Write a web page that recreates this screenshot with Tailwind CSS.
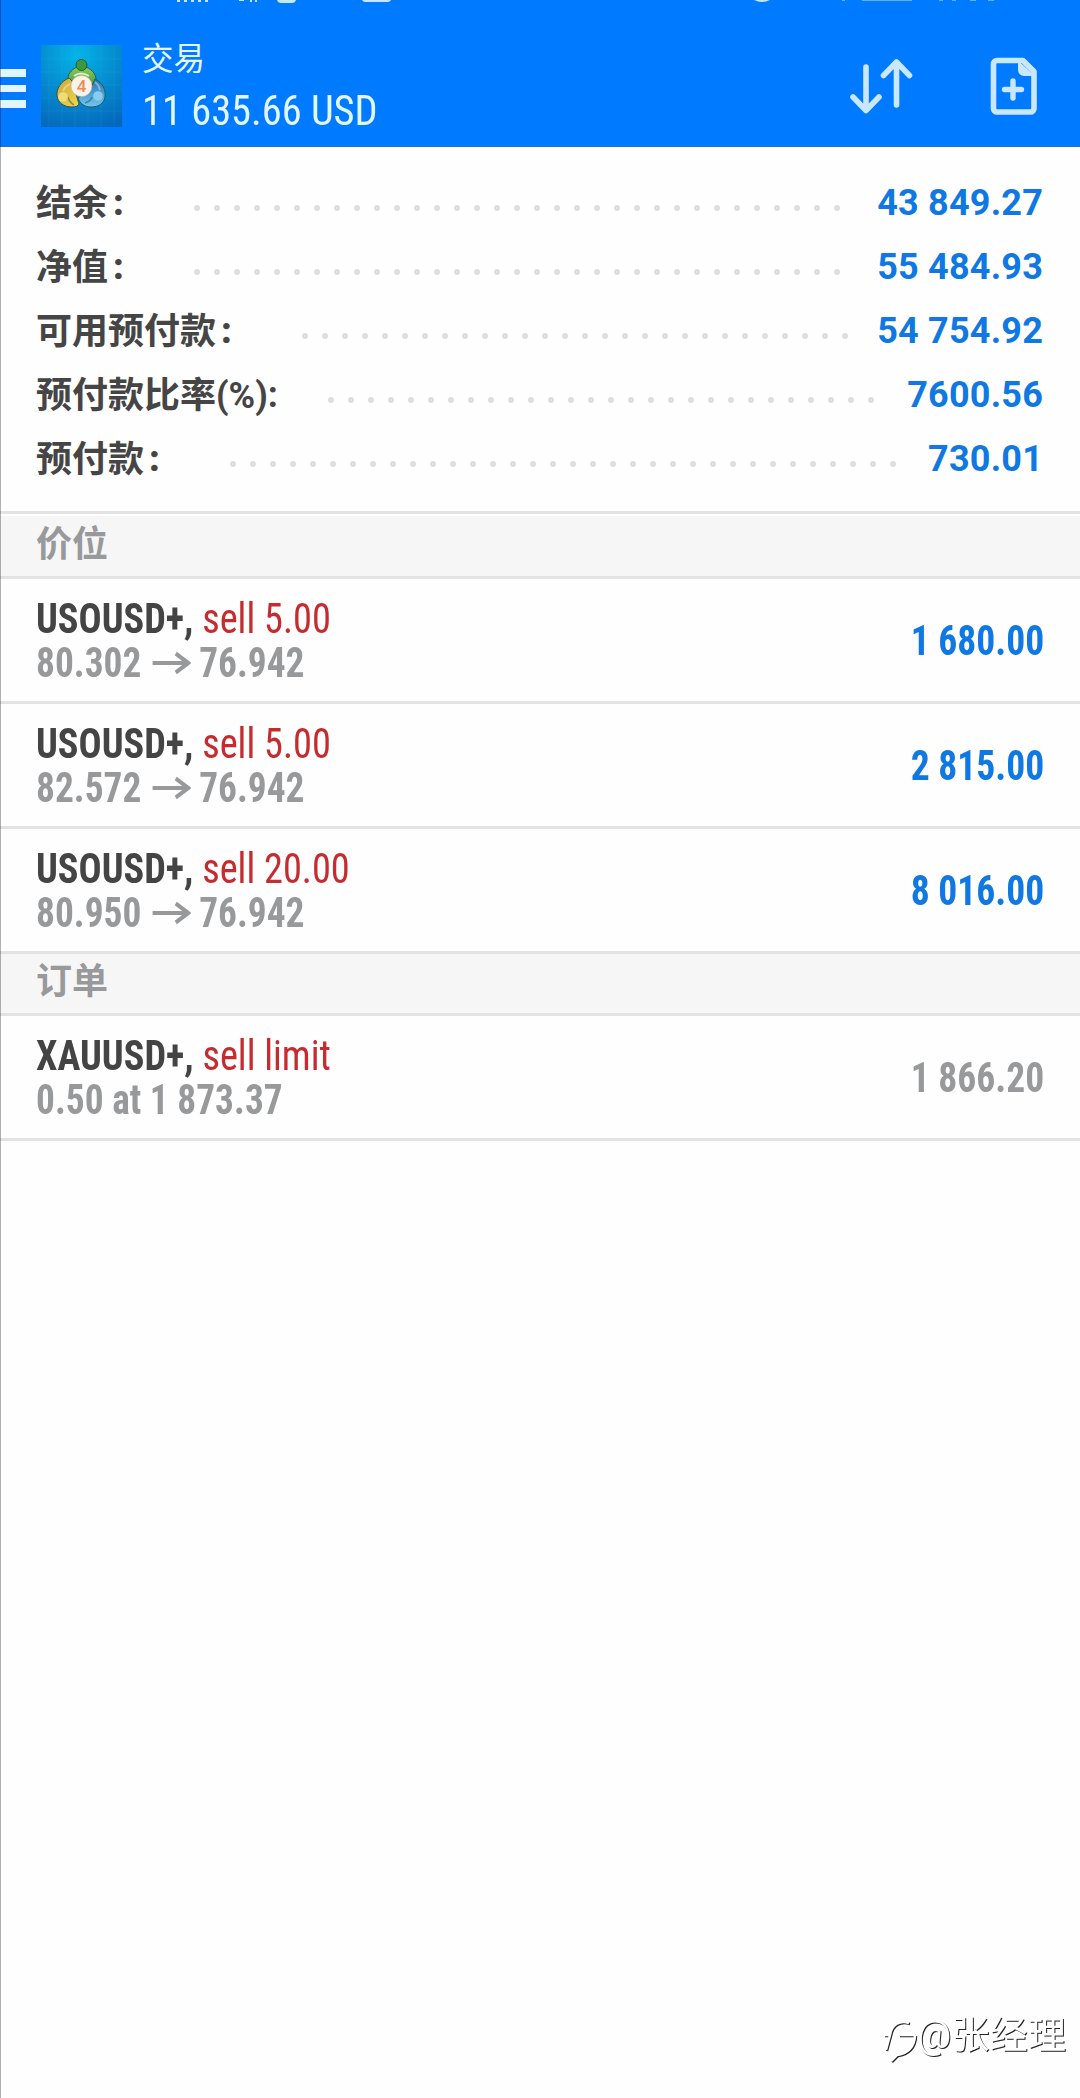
<!DOCTYPE html>
<html lang="zh-CN">
<head>
    <meta charset="UTF-8">
    <meta name="viewport" content="width=device-width, initial-scale=1.0">
    <title>交易</title>
    <script src="https://cdn.jsdelivr.net/npm/@tailwindcss/browser@4"></script>
</head>
<body class="bg-white">
    <div class="relative flex flex-col w-[1080px] h-[2098px] overflow-hidden bg-[#fefefe] font-['Roboto','Noto_Sans_CJK_SC',sans-serif]">
        <!-- Header -->
        <header class="relative flex items-start h-[147px] shrink-0 bg-[#007aff] border-b border-[#2a6fc0] text-[#e2f6ff]">
            <svg class="absolute left-0 top-0" width="1080" height="4" fill="#c4e6ff">
                <path d="M177 0h3v2h-3zM184 0h3v2h-3zM191 0h3v2h-3zM198 0h3v2h-3zM205 0h3v2h-3zM239 0h5v1h-5zM250 0h2v2h-2zM255 0h2v2h-2z"/>
                <path d="M277 0h19q-1 3-4 3h-11q-3 0-4-3zM362 0h29q-1 2-3 2h-23q-2 0-3-2zM754 0h16q-8 4-16 0z"/>
                <path d="M862 0h50v1h-50zM842 0h3v1h-3zM939 0h4v1h-4zM952 0h4v1h-4zM970 0h6v1h-6zM988 0h6v1h-6z" opacity=".5"/>
            </svg>
            <div class="mt-[69px] w-[26px] flex flex-col gap-2">
                <div class="h-[7.5px] bg-[#e2f6ff]"></div>
                <div class="h-[7.5px] bg-[#e2f6ff]"></div>
                <div class="h-[7.5px] bg-[#e2f6ff]"></div>
            </div>
            <svg class="ml-[15px] mt-[45px]" width="81" height="82" viewBox="0 0 81 82">
                <defs>
                    <radialGradient id="bg" cx=".45" cy=".12" r=".95"><stop offset="0" stop-color="#04b4e8"/><stop offset=".45" stop-color="#0590d2"/><stop offset="1" stop-color="#0568bb"/></radialGradient>
                    <linearGradient id="green" x2="0" y2="1"><stop stop-color="#8ecb5c"/><stop offset="1" stop-color="#2d8a35"/></linearGradient>
                    <linearGradient id="gold" x2="1" y2="1"><stop stop-color="#c9a63a"/><stop offset="1" stop-color="#f3d84c"/></linearGradient>
                    <linearGradient id="sky" x2="0" y2="1"><stop stop-color="#2475b5"/><stop offset="1" stop-color="#76c5f0"/></linearGradient>
                </defs>
                <rect width="81" height="82" fill="url(#bg)"/>
                <path d="M8 0v82M21 0v82M34 0v82M47 0v82M60 0v82M73 0v82M0 14h81M0 27h81M0 40h81M0 53h81M0 66h81" stroke="#3fc0ee" stroke-opacity=".13" fill="none"/>
                <g stroke="#235a53" stroke-width="1">
                    <path d="M27 37c-1-8 3-12 9-15h9c7 3 11 8 10 16l-4 9H31z" fill="url(#green)"/>
                    <path d="M28 33c-8 3-13 11-12 18 1 7 7 11 15 11 4 0 6-1 7-3l-7-23z" fill="url(#gold)"/>
                    <path d="M54 34c8 4 11 11 10 18-1 7-7 10-14 10-6 0-11-3-13-9l13-10z" fill="url(#sky)"/>
                </g>
                <path d="M22 46q2-5 7-7M59 45q-1-5-5-8" stroke="#fff" stroke-opacity=".35" stroke-width="2" fill="none"/>
                <path d="M27 52q1 5 6 8M51 52q-1 4-7 6" stroke="#1d4d66" stroke-opacity=".5" stroke-width="1.500" fill="none"/>
                <circle cx="40.500" cy="20" r="5.500" fill="#3c9942" stroke="#205f35"/>
                <circle cx="22" cy="52" r="4.800" fill="#f0dc78"/>
                <circle cx="57" cy="51" r="4.800" fill="#8accf0"/>
                <path d="M33 31q7-5 15 0" stroke="#d9efc0" stroke-width="2" fill="none"/>
                <circle cx="40.500" cy="41" r="10.500" fill="#fbf3ea" stroke="#cdb9a6" stroke-width=".6"/>
                <text x="40.500" y="47" text-anchor="middle" font-family="Roboto" font-size="17" font-weight="500" fill="#f08a50">4</text>
            </svg>
            <div class="ml-[20px] mt-[38px]">
                <div class="text-[31.5px] leading-[44px]">交易</div>
                <div class="origin-left scale-x-[0.94] text-[43px] leading-[56px] font-stretch-75% whitespace-nowrap">11 635.66 USD</div>
            </div>
            <svg class="absolute left-[799px] top-[50px]" width="280" height="75" viewBox="0 0 280 75" fill="none" stroke="#c9e8ff" stroke-linecap="round" stroke-linejoin="round">
                <path d="M67 17v43M54 47l13 13.500L80 47M97.500 55V12M84.500 25.500L97.500 12l13 13.500" stroke-width="5.600"/>
                <path d="M198 10.500h26l11 11v37a3.500 3.500 0 0 1-3.500 3.500h-33.500a3.500 3.500 0 0 1-3.500-3.500v-44.500a3.500 3.500 0 0 1 3.500-3.500z" stroke-width="5.600"/>
                <path d="M219 10.500v9q0 6.500 6.500 6.500h10.500z" fill="#c9e8ff" stroke="none"/>
                <path d="M214 31v17M205.500 39.500h17" stroke-width="5.400"/>
            </svg>
        </header>

        <!-- Account summary -->
        <section id="summary" class="h-[367px] shrink-0 border-b-3 border-[#e3e3e3] pt-[24px] pl-[36px] pr-[37px]"></section>

        <h2 class="h-[65px] shrink-0 border-b-3 border-[#e3e3e3] border-t-2 border-t-white bg-[#f6f6f6] pl-[36px] text-[36px] leading-[58px] font-bold text-[#98999b]">价位</h2>
        <section id="positions" class="shrink-0"></section>

        <h2 class="h-[62px] shrink-0 border-b-3 border-[#e3e3e3] bg-[#f6f6f6] pl-[36px] text-[36px] leading-[56px] font-bold text-[#98999b]">订单</h2>
        <section id="orders" class="shrink-0"></section>

        <!-- Left screen edge -->
        <div class="absolute left-0 top-0 w-px h-full bg-black/30"></div>

        <!-- Watermark -->
        <div class="absolute left-[882px] top-[2007px] flex items-center text-white drop-shadow-[1px_1px_0.5px_#222]">
            <svg width="35" height="56" viewBox="0 0 35 56" fill="none" stroke="#fff" stroke-width="2.500">
                <path d="M4 43l4-15H2M8 28C10 17 18 13 27 16M17 28h16M33 28c0 12-8 19-18 20l-6 6"/>
            </svg>
            <span class="text-[38px] leading-[56px] tracking-[0.3px] whitespace-nowrap">@张经理</span>
        </div>
    </div>

    <script>
        const summary = [
            { label: '结余', wide: true, value: '43 849.27', dots: 33 },
            { label: '净值', wide: true, value: '55 484.93', dots: 33 },
            { label: '可用预付款', wide: true, value: '54 754.92', dots: 28 },
            { label: '预付款比率(%)', wide: false, value: '7600.56', dots: 28 },
            { label: '预付款', wide: true, value: '730.01', dots: 34 }
        ];
        const positions = [
            { symbol: 'USOUSD+,', side: 'sell 5.00', open: '80.302', now: '76.942', profit: '1 680.00' },
            { symbol: 'USOUSD+,', side: 'sell 5.00', open: '82.572', now: '76.942', profit: '2 815.00' },
            { symbol: 'USOUSD+,', side: 'sell 20.00', open: '80.950', now: '76.942', profit: '8 016.00' }
        ];
        const orders = [
            { symbol: 'XAUUSD+,', side: 'sell limit', detail: '0.50 at 1 873.37', price: '1 866.20' }
        ];

        const arrow = `<svg class="ml-[12px] mr-[9px]" width="44" height="24" viewBox="0 0 44 24" fill="none" stroke="#98999b" stroke-width="4.200"><path d="M1 12h40M27 2.500L41 12 27 21.500"/></svg>`;

        document.getElementById('summary').innerHTML = summary.map(r => `
            <div class="flex items-center h-[64px] text-[36px] leading-[64px]">
                <span class="pt-[2px] font-bold text-[#454545] whitespace-nowrap">${r.label}</span>
                <span class="text-[#454545] ${r.wide ? 'w-[36px] pl-[5px] font-black' : 'font-bold'}">:</span>
                <svg class="ml-[50px] mt-[9px]" width="${r.dots * 20}" height="6" fill="#dedede">
                    ${Array.from({ length: r.dots }, (_, i) => `<circle cx="${i * 20 + 3}" cy="3" r="3"/>`).join('')}
                </svg>
                <span class="ml-auto font-bold tracking-[0.2px] text-[#0f78e2] whitespace-nowrap">${r.value}</span>
            </div>`).join('');

        const row = (r, second, value, color) => `
            <div class="flex justify-between h-[125px] border-b-3 border-[#e3e3e3] pl-[36px] pr-[36px] text-[42px] font-stretch-75% whitespace-nowrap">
                <div class="pt-[18px]">
                    <div class="origin-left scale-x-[0.912] h-[44px] leading-[44px]"><span class="font-bold text-[#444]">${r.symbol}</span> <span class="text-[#c62b2f]">${r.side}</span></div>
                    <div class="origin-left scale-x-[0.89] flex items-center h-[44px] leading-[44px] font-bold text-[#98999b]">${second}</div>
                </div>
                <div class="origin-right scale-x-[0.895] leading-[124px] font-bold ${color}">${value}</div>
            </div>`;

        document.getElementById('positions').innerHTML = positions.map(r => row(r, r.open + arrow + r.now, r.profit, 'text-[#0f78e2]')).join('');
        document.getElementById('orders').innerHTML = orders.map(r => row(r, r.detail, r.price, 'text-[#98999b]')).join('');
    </script>
</body>
</html>
